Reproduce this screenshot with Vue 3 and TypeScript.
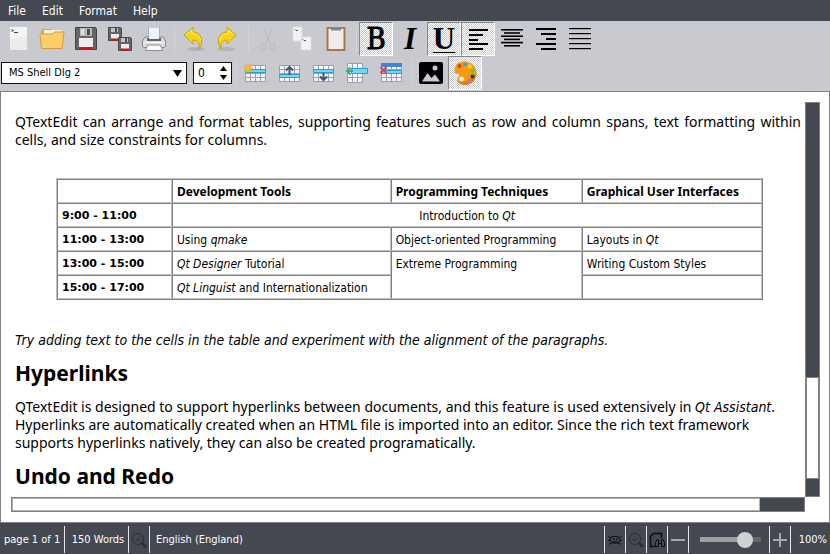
<script setup lang="ts">
import { reactive, ref } from 'vue'

const menus = ['File', 'Edit', 'Format', 'Help']
const fonts = ['MS Shell Dlg 2', 'Arial', 'Times New Roman']
const font = ref(fonts[0])
const size = ref(0)
const zoom = ref(100)
const align = ref('left')
const on = reactive({ bold: true, italic: false, underline: true, color: true })

// x start, x end and y of every stroke of the alignment icons
type Line = [number, number, number]
const alignments: { name: string; width: number; lines: Line[] }[] = [
  { name: 'left', width: 2, lines: [[8, 27, 7], [8, 22, 12], [8, 17, 17], [8, 27, 21], [8, 22, 26]] },
  { name: 'center', width: 1.6, lines: [[6, 28, 7], [9, 25, 10.2], [6, 28, 13.4], [9, 25, 16.6], [6, 28, 19.8], [9, 25, 23]] },
  { name: 'right', width: 2, lines: [[7, 27, 6], [12, 27, 11], [17, 27, 16], [7, 27, 21], [12, 27, 26]] },
  { name: 'justify', width: 1.2, lines: [[6, 28, 6], [6, 28, 11], [6, 28, 16], [6, 28, 21], [6, 28, 26]] },
]

const tableTools = ['insert-table', 'row-above', 'row-below', 'column-left', 'delete-row']
</script>

<template>
  <div class="window">
    <nav class="menubar" aria-label="Main menu">
      <button v-for="m in menus" :key="m" type="button">{{ m }}</button>
    </nav>

    <div class="tools">
      <div class="bar" role="toolbar" aria-label="Document">
        <button type="button" class="tool" aria-label="New">
          <svg viewBox="0 0 34 34">
            <path d="M9 5h17v23H9z" fill="#f5f5f5" />
            <path d="M9 18l17-5v15H9z" fill="#ececec" />
            <path d="M10.500 7.500l2 1-2 1M13 10.500h4" stroke="#444" fill="none" />
          </svg>
        </button>
        <button type="button" class="tool" aria-label="Open">
          <svg viewBox="0 0 34 34">
            <path d="M6 26V9l2-2h8l2 2h10v17z" fill="#dca544" />
            <path d="M9 8h18v5H9z" fill="#f7f0df" />
            <path d="M5 12h12l3-2h9l-2 16.500H6.500z" fill="#fdce68" stroke="#d59b3a" />
          </svg>
        </button>
        <button type="button" class="tool" aria-label="Save">
          <svg viewBox="0 0 34 34">
            <path d="M6.500 5.500h20l1 1.500v20.500h-21z" fill="#666" stroke="#444" />
            <path d="M11 6h12v8H11z" fill="#b8bab9" />
            <path d="M18 7h3v6h-3z" fill="#4d4f4f" />
            <path d="M12 7h3v6h-3z" fill="#dedfde" />
            <path d="M10 16h14v11H10z" fill="#eceeee" />
            <path d="M10 25h14v3H10z" fill="#d8101c" />
          </svg>
        </button>
        <button type="button" class="tool" aria-label="Save all">
          <svg viewBox="0 0 34 34">
            <g v-for="p in [[5, 5], [15, 15]]" :key="p[0]" :transform="`translate(${p[0]} ${p[1]})`">
              <path d="M.5.5h12l1 1v12H.500z" fill="#666" stroke="#4a4a4a" />
              <path d="M3 1h7v4H3z" fill="#c4c6c5" />
              <path d="M7 1h2v4H7z" fill="#4d4f4f" />
              <path d="M3 7h8v5H3z" fill="#eceeee" />
              <path d="M3 11.500h8V13.500H3z" fill="#d8101c" />
            </g>
          </svg>
        </button>
        <button type="button" class="tool" aria-label="Print">
          <svg viewBox="0 0 34 34">
            <path d="M11.500 17V5.500h11V17z" fill="#eef4fb" stroke="#9db3d0" />
            <path d="M8 15h18l2.500 4v5.500l-1.500 1H7l-1.500-1V19z" fill="#dcdee2" stroke="#85868d" />
            <path d="M10 16h14v3H10z" fill="#5f6470" />
            <path d="M12 5.500h10V17H12z" fill="#eef4fb" />
            <path d="M6 20.500h22" stroke="#f8f8f8" />
            <path d="M10.500 23h13l2 5.500h-17z" fill="#f7f9fc" stroke="#8b8e96" />
          </svg>
        </button>
        <i class="sep"></i>
        <button type="button" class="tool" aria-label="Undo">
          <svg viewBox="0 0 34 34">
            <ellipse cx="19" cy="27" rx="9" ry="2" fill="#b2b3b5" />
            <path d="M7 13l9-7.500V10c8 0 11.500 9 6 17 1-6-1-9-6-9v4z" fill="#f5d416" stroke="#c9a406" stroke-linejoin="round" />
            <path d="M9.500 12.500L15 8v3.500c5 0 8 3 8.500 7" fill="none" stroke="#fbec7c" />
          </svg>
        </button>
        <button type="button" class="tool" aria-label="Redo">
          <svg viewBox="0 0 34 34">
            <ellipse cx="15" cy="27" rx="9" ry="2" fill="#b2b3b5" />
            <path d="M25 13l-9-7.500V10c-8 0-11.500 9-6 17-1-6 1-9 6-9v4z" fill="#f5d416" stroke="#c9a406" stroke-linejoin="round" />
            <path d="M22.500 12.500L17 8v3.500c-5 0-8 3-8.500 7" fill="none" stroke="#fbec7c" />
          </svg>
        </button>
        <i class="sep"></i>
        <button type="button" class="tool" aria-label="Cut" disabled>
          <svg viewBox="0 0 34 34" fill="none" stroke="#bfbfc1">
            <path d="M13 6l7 17M21 6l-7 17" stroke-width="1.500" />
            <ellipse cx="12.500" cy="25" rx="2.500" ry="3" stroke-width="1.500" />
            <ellipse cx="21.500" cy="25" rx="2.500" ry="3" stroke-width="1.500" />
          </svg>
        </button>
        <button type="button" class="tool" aria-label="Copy">
          <svg viewBox="0 0 34 34">
            <path d="M8 5h9v14H8zM16 15h10v13H16z" fill="#f3f3f3" stroke="#dedede" />
            <path d="M9.500 7.500l1 .5M11 8.500h2M17.500 17.500l1 .5M19 18.500h2" stroke="#555" />
          </svg>
        </button>
        <button type="button" class="tool" aria-label="Paste">
          <svg viewBox="0 0 34 34">
            <path d="M8.500 6h17v22h-17z" fill="#f1ecec" stroke="#a9794b" stroke-width="2" />
            <path d="M12 5h10v3.500H12z" fill="#85868a" />
          </svg>
        </button>
        <i class="sep"></i>
        <button type="button" class="tool glyph bold" aria-label="Bold" :aria-pressed="on.bold" @click="on.bold = !on.bold">B</button>
        <button type="button" class="tool glyph italic" aria-label="Italic" :aria-pressed="on.italic" @click="on.italic = !on.italic">I</button>
        <button type="button" class="tool glyph underline" aria-label="Underline" :aria-pressed="on.underline" @click="on.underline = !on.underline">U</button>
        <button
          v-for="a in alignments"
          :key="a.name"
          type="button"
          class="tool"
          :aria-label="'Align ' + a.name"
          :aria-pressed="align === a.name"
          @click="align = a.name"
        >
          <svg viewBox="0 0 34 34">
            <rect v-for="l in a.lines" :key="l[2]" :x="l[0]" :y="l[2]" :width="l[1] - l[0]" :height="a.width" />
          </svg>
        </button>
      </div>

      <div class="bar" role="toolbar" aria-label="Text">
        <div class="combo">
          <select v-model="font" aria-label="Font family">
            <option v-for="f in fonts" :key="f">{{ f }}</option>
          </select>
          <svg viewBox="0 0 9 7"><path d="M0 0h9L4.500 7z" /></svg>
        </div>
        <i class="sep"></i>
        <div class="spin">
          <input v-model.number="size" type="text" aria-label="Font size" />
          <div class="steps">
            <button type="button" aria-label="Larger" @click="size++"><svg viewBox="0 0 7 5"><path d="M0 5h7L3.500 0z" /></svg></button>
            <button type="button" aria-label="Smaller" @click="size--"><svg viewBox="0 0 7 5"><path d="M0 0h7L3.500 5z" /></svg></button>
          </div>
        </div>
        <i class="sep"></i>
        <button v-for="t in tableTools" :key="t" type="button" class="tool" :aria-label="t.replace('-', ' ')">
          <svg viewBox="0 0 34 34">
            <path
              :d="t === 'column-left' ? 'M7.500 7.500h15v19h-15z' : 'M7.500 9.500h20v16h-20z'"
              fill="#f3f4f7"
              stroke="#9ba0aa"
            />
            <path
              :d="t === 'column-left' ? 'M12.500 8v18M17.500 8v18M8 12.500h14M8 21.500h14' : 'M12.500 10v15M17.500 10v15M22.500 10v15M8 13.500h19M8 17.500h19M8 21.500h19'"
              fill="none"
              stroke="#9ba0aa"
            />
            <template v-if="t === 'insert-table'">
              <path d="M7.500 13.500h20v3h-20z" fill="#78d6f3" stroke="#29a0cc" />
              <path d="M10 7v10M5 12h10M6.500 8.500l7 7M13.500 8.500l-7 7" stroke="#f2a62c" stroke-width="1.200" />
              <circle cx="10" cy="12" r="3" fill="#fbb53a" />
            </template>
            <template v-else-if="t === 'row-above'">
              <path d="M7.500 18.500h20v3h-20z" fill="#78d6f3" stroke="#29a0cc" />
              <path d="M17.500 19v-7" stroke="#45536b" stroke-width="2" />
              <path d="M14 14.500l3.500-3.500 3.500 3.500" fill="none" stroke="#45536b" stroke-width="2" />
            </template>
            <template v-else-if="t === 'row-below'">
              <path d="M7.500 13.500h20v3h-20z" fill="#78d6f3" stroke="#29a0cc" />
              <path d="M17.500 17v7" stroke="#45536b" stroke-width="2" />
              <path d="M14 20.500l3.500 3.500 3.500-3.500" fill="none" stroke="#45536b" stroke-width="2" />
            </template>
            <template v-else-if="t === 'column-left'">
              <path d="M11.500 12.500h16v5h-16z" fill="#78d6f3" stroke="#29a0cc" />
              <path d="M13 15H7M10.500 11.500L7 15l3.500 3.500" fill="none" stroke="#35b08a" stroke-width="2" />
            </template>
            <template v-else>
              <path d="M7 7h21v4H7z" fill="#4782d4" />
              <path d="M7.500 14.500h20v3h-20z" fill="#78d6f3" stroke="#29a0cc" />
              <path d="M6.500 11l6 6M12.500 11l-6 6" stroke="#d5474d" stroke-width="2" />
            </template>
          </svg>
        </button>
        <i class="sep"></i>
        <button type="button" class="tool" aria-label="Insert picture">
          <svg viewBox="0 0 34 34">
            <rect x="5" y="6" width="24" height="22" rx="2" />
            <path d="M8 25.500l5.500-8.500 4 5 3.500-3.500 5 7z" fill="#c9cacf" />
            <circle cx="21" cy="12" r="2.500" fill="#c9cacf" />
          </svg>
        </button>
        <button type="button" class="tool" aria-label="Colour" :aria-pressed="on.color" @click="on.color = !on.color">
          <svg viewBox="0 0 34 34">
            <path d="M16 5.500c7 0 12.500 5 12.500 11.500C28.500 24 23 29 17 29c-4.500 0-8-2.500-8-5.500 0-2 3-3 2-5-1-1-4 .5-4.500-3C6 9.500 10 5.500 16 5.500z" fill="#f39c12" />
            <path d="M28.500 17C28.500 24 23 29 17 29c-4 0-7-2-8-4.500 5 2.500 13 1 19.500-7.500z" fill="#d9820c" />
            <circle cx="13.500" cy="23" r="2.500" fill="#e8e8ea" />
            <circle cx="11.500" cy="10" r="2" fill="#e03b3b" />
            <circle cx="17" cy="8.500" r="2" fill="#3ba5e0" />
            <circle cx="22" cy="10.500" r="2" fill="#f6d912" />
            <circle cx="25" cy="15" r="2" fill="#57c93b" />
            <circle cx="24.500" cy="20.500" r="2" fill="#333" />
            <circle cx="21" cy="24.500" r="2" fill="#c86ad0" />
          </svg>
        </button>
      </div>
    </div>

    <main class="editor">
      <article class="page">
        <p class="justified">
          QTextEdit can arrange and format tables, supporting features such as row and column spans, text formatting within
          cells, and size constraints for columns.
        </p>
        <table>
          <colgroup>
            <col class="c1" /><col class="c2" /><col class="c3" /><col class="c4" />
          </colgroup>
          <tbody>
            <tr>
              <td></td>
              <th scope="col">Development Tools</th>
              <th scope="col">Programming Techniques</th>
              <th scope="col">Graphical User Interfaces</th>
            </tr>
            <tr>
              <th scope="row">9:00 - 11:00</th>
              <td colspan="3" class="center">Introduction to <em>Qt</em></td>
            </tr>
            <tr>
              <th scope="row">11:00 - 13:00</th>
              <td>Using <em>qmake</em></td>
              <td>Object-oriented Programming</td>
              <td>Layouts in <em>Qt</em></td>
            </tr>
            <tr>
              <th scope="row">13:00 - 15:00</th>
              <td><em>Qt Designer</em> Tutorial</td>
              <td rowspan="2">Extreme Programming</td>
              <td>Writing Custom Styles</td>
            </tr>
            <tr>
              <th scope="row">15:00 - 17:00</th>
              <td><em>Qt Linguist</em> and Internationalization</td>
              <td></td>
            </tr>
          </tbody>
        </table>
        <p><em>Try adding text to the cells in the table and experiment with the alignment of the paragraphs.</em></p>
        <h2>Hyperlinks</h2>
        <p>
          QTextEdit is designed to support hyperlinks between documents, and this feature is used extensively in
          <em>Qt Assistant</em>.<br />
          Hyperlinks are automatically created when an HTML file is imported into an editor. Since the rich text framework<br />
          supports hyperlinks natively, they can also be created programatically.
        </p>
        <h2>Undo and Redo</h2>
      </article>
      <div class="vscroll"><div class="handle"></div></div>
      <div class="hscroll"><div class="handle"></div></div>
    </main>

    <footer class="status">
      <span class="cell first">page 1 of 1</span>
      <span class="cell words">150 Words</span>
      <button type="button" class="cell" aria-label="Proofing">
        <svg viewBox="0 0 20 20" fill="none" stroke="#2d2f33">
          <circle cx="9" cy="9" r="5.500" /><path d="M6.500 9l2 2 3-4" /><path d="M13 13l4 4" stroke-width="3" />
        </svg>
      </button>
      <span class="language">English (England)</span>
      <button type="button" class="cell edge" aria-label="Macro">
        <svg viewBox="0 0 20 20" fill="none" stroke="#0c0d0f">
          <path d="M7 6.500h6l2 3-2 3.500H7L5 9.500zM3.500 6.500L6 8M16.500 6.500L14 8M3 10.500h3M17 10.500h-3M4 14.500l3-2M16 14.500l-3-2" />
          <path d="M8 9h1.500M11 9h1.500M8 12h4" stroke-width="1.500" />
        </svg>
      </button>
      <button type="button" class="cell" aria-label="Find">
        <svg viewBox="0 0 20 20" fill="none" stroke="#2d2f33">
          <circle cx="9" cy="9" r="5.500" /><path d="M6.500 9l2 2 3-4" /><path d="M13 13l4 4" stroke-width="3" />
        </svg>
      </button>
      <button type="button" class="cell" aria-label="Find in document">
        <svg viewBox="0 0 20 20" fill="none" stroke="#0c0d0f">
          <path d="M8 16.500H3.500v-10l3-3h8V8" stroke-width="1.500" />
          <path d="M8.500 16.500v-4L10 9.500h1.500v7zM14.500 16.500v-7H16l1.500 3v4zM11.500 13.500h3" />
        </svg>
      </button>
      <button type="button" class="cell" aria-label="Zoom out" @click="zoom -= 10">
        <svg viewBox="0 0 20 20"><path d="M3 10h14" stroke="#a5a7ab" stroke-width="2" /></svg>
      </button>
      <div class="cell zoom"><input v-model.number="zoom" type="range" min="0" max="120" aria-label="Zoom" /></div>
      <button type="button" class="cell" aria-label="Zoom in" @click="zoom += 10">
        <svg viewBox="0 0 20 20"><path d="M3 10h14M10 3v14" stroke="#a5a7ab" stroke-width="2" /></svg>
      </button>
      <span class="percent">{{ zoom }}%</span>
    </footer>
  </div>
</template>

<style>
body {
  background: #444850;
}
</style>

<style scoped>
.window {
  display: flex;
  flex-direction: column;
  height: 100vh;
  overflow: hidden;
  background: #c9cacf;
  color: #000;
  font: 12px/16px 'DejaVu Sans Condensed', 'Noto Sans', sans-serif;
}
* {
  box-sizing: border-box;
}
button,
select,
input {
  margin: 0;
  padding: 0;
  border: 0;
  background: none;
  color: inherit;
  font: inherit;
}
svg {
  display: block;
}
.menubar {
  display: flex;
  gap: 16px;
  height: 21px;
  padding: 0 8px;
  background: #444850;
  color: #fff;
}
.tools {
  padding: 1px 0;
}
.bar {
  display: flex;
  align-items: center;
  padding-left: 1px;
}
.tool {
  flex: none;
  width: 34px;
  height: 34px;
  border: 1px solid transparent;
}
.tool svg {
  width: 34px;
  height: 34px;
  margin: -1px;
}
.tool[aria-pressed='true'] {
  border-color: #85868a #fff #fff #85868a;
  background: repeating-conic-gradient(#fff 0 25%, #c9cacf 0 50%) 0 0 / 2px 2px;
}
.sep {
  flex: none;
  width: 6px;
  height: 26px;
  background: linear-gradient(#d3d4d8, #d3d4d8) center / 1px 100% no-repeat;
}
.glyph {
  font-family: 'Liberation Serif', serif;
  font-size: 31px;
  font-weight: bold;
  line-height: 32px;
}
.bold {
  font-family: 'DejaVu Serif Condensed', 'DejaVu Serif', serif;
  font-size: 29px;
  font-weight: normal;
  -webkit-text-stroke: 1px #000;
}
.italic {
  font-style: italic;
}
.underline {
  font-weight: bold;
  text-decoration: underline 1px;
  text-underline-offset: 3px;
}
.combo {
  display: flex;
  align-items: center;
  width: 186px;
  height: 22px;
  padding-right: 4px;
  border: 1px solid #111;
  background: #fff;
}
.combo select {
  flex: 1;
  height: 20px;
  padding-left: 7px;
  appearance: none;
  font-size: 11px;
}
.combo svg {
  width: 9px;
  height: 7px;
}
.spin {
  display: flex;
  width: 39px;
  height: 22px;
  border: 1px solid #111;
  background: #fff;
}
.spin input {
  width: 26px;
  padding-left: 4px;
  font-size: 12px;
}
.steps {
  display: grid;
  gap: 4px;
  align-content: center;
}
.steps svg {
  width: 7px;
  height: 5px;
}

.editor {
  flex: 1;
  min-height: 0;
  display: grid;
  grid-template: 1fr 15px / 1fr 15px;
  padding: 10px 9px 10px 10px;
  border: 1px solid #808084;
  background: #fff;
}
.page {
  min-height: 0;
  overflow: hidden;
  padding: 11px 4px 0;
  font-family: 'Noto Sans', 'Open Sans', sans-serif;
  font-size: 14px;
  line-height: 18px;
}
.page p {
  margin: 0 0 10px;
}
.page h2 {
  margin: 0 0 11px;
  font-size: 21px;
  line-height: 28px;
}
.page .justified {
  margin: 0;
  text-align: justify;
}
.page em {
  font-family: 'DejaVu Sans Condensed', sans-serif;
}
table {
  width: 90%;
  margin: 29px 0 31px 41px;
  table-layout: fixed;
  border: 1px solid;
  border-color: #c0c0c0 #808080 #808080 #c0c0c0;
  border-spacing: 0;
  font-family: 'DejaVu Sans Condensed', sans-serif;
  font-size: 12px;
  line-height: 16px;
}
.c1 {
  width: 16.300%;
}
.c2 {
  width: 31%;
}
.c3 {
  width: 27.100%;
}
th,
td {
  height: 24px;
  padding: 4px 4px 2px;
  border: 1px solid;
  border-color: #808080 #c0c0c0 #c0c0c0 #808080;
  text-align: left;
  vertical-align: top;
}
th[scope='col'] {
  font-family: 'Noto Sans', sans-serif;
}
th[scope='row'] {
  font-family: 'DejaVu Sans', sans-serif;
  font-size: 11px;
}
.center {
  text-align: center;
}
.vscroll,
.hscroll {
  display: flex;
  border: 1px solid #808080;
  background: #444850;
}
.vscroll {
  flex-direction: column;
  justify-content: flex-end;
  padding-bottom: 17px;
}
.hscroll {
  padding-right: 44px;
}
.vscroll .handle {
  height: 27%;
  border: 1px solid #808080;
  background: #fff;
}
.hscroll .handle {
  flex: 1;
  border: 1px solid #b0b0b0;
  background: #fff;
}

.status {
  display: flex;
  align-items: center;
  height: 31px;
  padding: 2px 3px 0 4px;
  background: #444850;
  color: #fff;
  font-size: 11px;
}
.cell {
  flex: none;
  display: flex;
  align-items: center;
  justify-content: center;
  width: 21px;
  height: 27px;
  border-right: 1px solid #e4e4e6;
}
.cell svg {
  width: 20px;
  height: 20px;
}
.first {
  width: 61px;
  justify-content: flex-start;
}
.words {
  width: 64px;
  padding-left: 3px;
}
.edge {
  width: 22px;
  border-left: 1px solid #e4e4e6;
}
.language {
  flex: 1;
  padding-left: 6px;
}
.zoom {
  width: 81px;
  padding-left: 3px;
}
.zoom input {
  width: 61px;
  height: 16px;
  appearance: none;
  background: linear-gradient(90deg, #a0a0a0 75%, #66676a 75%) center / 100% 5px no-repeat;
}
.zoom input::-webkit-slider-thumb {
  width: 16px;
  height: 16px;
  appearance: none;
  border-radius: 50%;
  background: #d0d1d5;
}
.percent {
  width: 36px;
  text-align: right;
}
</style>
